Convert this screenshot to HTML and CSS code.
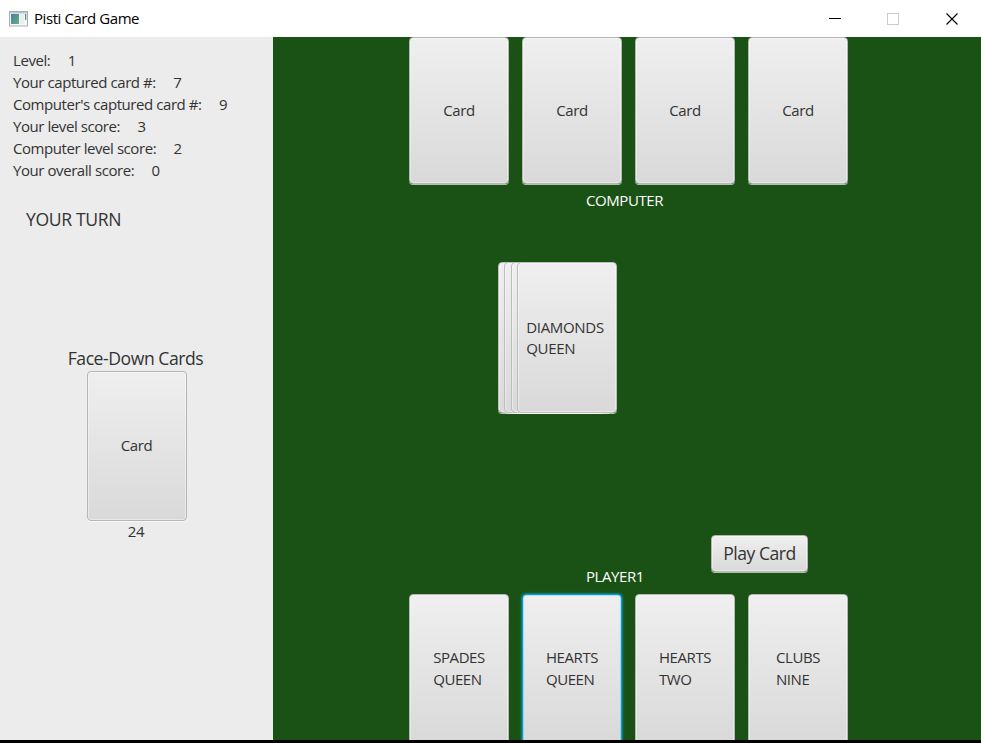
FILE: index.html
```html
<!DOCTYPE html>
<html lang="en">
<head>
<meta charset="utf-8">
<title>Pisti Card Game</title>
<link rel="stylesheet" href="styles.css">
</head>
<body>
<header class="titlebar">
  <svg class="app-icon" width="19" height="16" viewBox="0 0 19 16">
    <defs><linearGradient id="g" x1="0" y1="0" x2="1" y2="1"><stop offset="0" stop-color="#4a7fa8"/><stop offset="1" stop-color="#62b27c"/></linearGradient></defs>
    <rect x=".5" y=".5" width="18" height="14.5" fill="#f6f7f8" stroke="#a9adb3"/>
    <rect x="1" y="1" width="17" height="1.5" fill="#bcc3cc"/>
    <rect x="2" y="3" width="8" height="10" fill="url(#g)"/>
    <rect x="11" y="3" width="4" height="10" fill="#eceeef"/>
    <rect x="16" y="3" width="1.3" height="6" fill="url(#g)"/>
  </svg>
  <h1 class="title">Pisti Card Game</h1>
  <svg class="controls" width="130" height="14" viewBox="0 0 130 14">
    <path d="M0 6.5h12" stroke="#000" fill="none"/>
    <rect x="58.500" y="1.500" width="11" height="11" stroke="#ccc" fill="none"/>
    <path d="M117.500 1.500l11 11M128.500 1.500l-11 11" stroke="#000" stroke-width="1.100" fill="none"/>
  </svg>
</header>
<main class="game">
  <aside class="sidebar">
    <dl class="stats">
      <div class="stat"><dt>Level:</dt><dd>1</dd></div>
      <div class="stat"><dt>Your captured card #:</dt><dd>7</dd></div>
      <div class="stat"><dt>Computer's captured card #:</dt><dd>9</dd></div>
      <div class="stat"><dt>Your level score:</dt><dd>3</dd></div>
      <div class="stat"><dt>Computer level score:</dt><dd>2</dd></div>
      <div class="stat"><dt>Your overall score:</dt><dd>0</dd></div>
    </dl>
    <p class="turn">YOUR TURN</p>
    <section class="deck">
      <h2 class="deck-title">Face-Down Cards</h2>
      <button class="card">Card</button>
      <span class="count">24</span>
    </section>
  </aside>
  <section class="table">
    <div class="hand computer">
      <button class="card">Card</button>
      <button class="card">Card</button>
      <button class="card">Card</button>
      <button class="card">Card</button>
    </div>
    <p class="name">COMPUTER</p>
    <div class="pile">
      <div class="card"></div>
      <div class="card"></div>
      <div class="card"></div>
      <button class="card"><span>DIAMONDS<br>QUEEN</span></button>
    </div>
    <button class="play">Play Card</button>
    <p class="name player-name">PLAYER1</p>
    <div class="hand player">
      <button class="card"><span>SPADES<br>QUEEN</span></button>
      <button class="card selected"><span>HEARTS<br>QUEEN</span></button>
      <button class="card"><span>HEARTS<br>TWO</span></button>
      <button class="card"><span>CLUBS<br>NINE</span></button>
    </div>
  </section>
</main>
</body>
</html>
```
FILE: styles.css
```css
* { box-sizing: border-box; }
body {
  margin: 0;
  height: 743px;
  overflow: hidden;
  background: #000;
  color: #333;
  font: 15px/22px "Open Sans", "Noto Sans", sans-serif;
  letter-spacing: -0.43px;
}
h1, h2, p, dl, dd { margin: 0; font-weight: 400; }
button { font: inherit; letter-spacing: inherit; color: inherit; }
.titlebar {
  height: 37px;
  display: flex;
  align-items: center;
  padding: 0 22px 0 9px;
  background: #fff;
}
.title { margin: 0 0 2px 6px; color: #000; font-size: 15px; }
.controls { margin-left: auto; }
.game {
  display: grid;
  grid-template-columns: 273px 1fr;
  height: 703px;
  overflow: hidden;
}
.sidebar { background: #ececec; padding-top: 12px; }
.stats { padding-left: 13px; }
.stat { display: flex; gap: 17.400px; }
.turn { margin: 26px 0 0 26px; font-size: 17.600px; line-height: 24px; letter-spacing: -0.35px; }
.deck {
  display: flex;
  flex-direction: column;
  align-items: center;
  margin-top: 115px;
}
.deck-title { margin: 0 2px 1px 0; font-size: 17.600px; line-height: 24px; letter-spacing: -0.45px; }
.count { margin: -1px 1px 0 0; }
.table {
  display: flex;
  flex-direction: column;
  align-items: flex-start;
  background: #1a5216;
}
.card, .play {
  border: 1px solid #b5b5b5;
  border-radius: 4px;
  background: linear-gradient(#efefef, #d9d9d9);
  box-shadow: inset 0 0 0 1px rgba(255, 255, 255, 0.4), 0 1px 0 rgba(255, 255, 255, 0.65);
}
.card {
  flex: none;
  display: flex;
  align-items: center;
  justify-content: center;
  width: 100px;
  height: 150px;
  padding: 0 0 2px;
  text-align: left;
}
.hand { display: flex; gap: 13px; margin-left: 136px; }
.computer .card { height: 147px; padding-bottom: 1px; }
.name { margin: 5px 0 0 313px; color: #fff; }
.pile { display: flex; margin: 51px 0 0 225px; }
.pile .card { margin-right: -93.670px; height: 151px; padding: 0 4px 0 0; line-height: 21px; border-color: #bdbdbd; letter-spacing: -0.3px; }
.pile .card:last-child { margin-right: 0; }
.play {
  width: 97px;
  height: 37px;
  margin: 122px 0 0 438px;
  padding: 0 0 1px;
  font-size: 17.600px;
  letter-spacing: -0.5px;
}
.player-name { margin-top: -7px; }
.player { margin-top: 7px; }
.card.selected {
  border-color: #039ed3;
  box-shadow: inset 0 0 0 1px rgba(3, 158, 211, 0.25), 0 0 2px 1px rgba(3, 158, 211, 0.65);
}
```
